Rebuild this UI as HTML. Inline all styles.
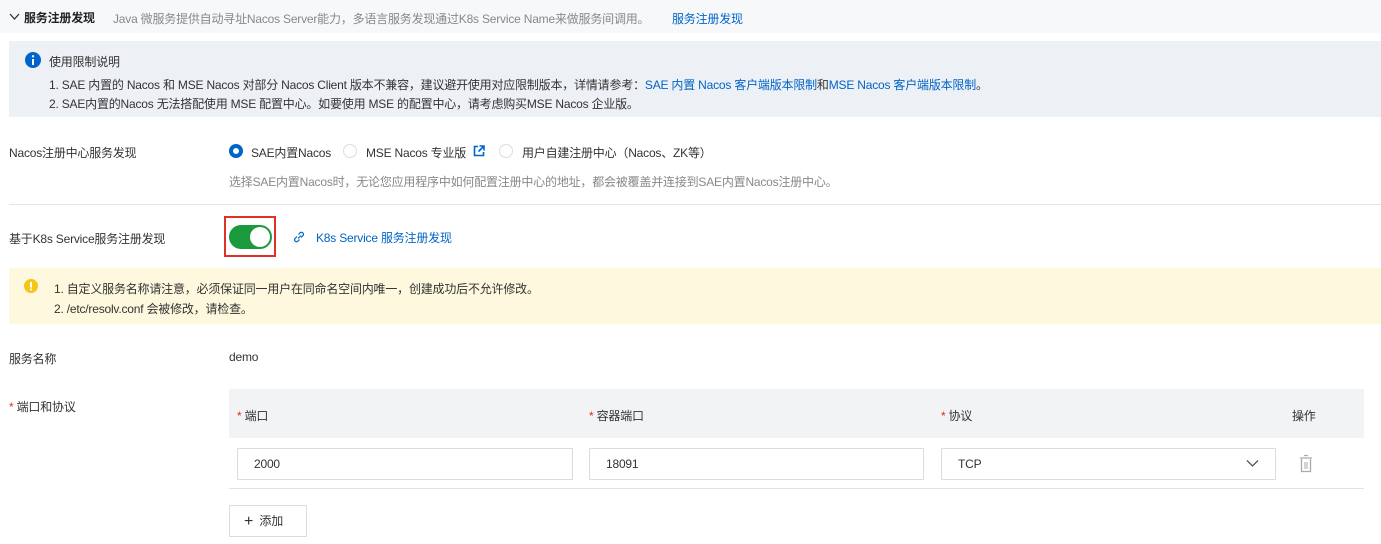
<!DOCTYPE html>
<html><head><meta charset="utf-8"><style>
*{margin:0;padding:0;box-sizing:border-box}
body{width:1381px;height:544px;background:#fff;font-family:"Liberation Sans","Noto Sans CJK SC",sans-serif;font-size:12px;color:#333;position:relative;overflow:hidden;letter-spacing:-0.2px}
.a{position:absolute;white-space:nowrap}
.blue{color:#0064c8}
.gray{color:#888}
.inp{position:absolute;height:32px;border:1px solid #dcdcdc;top:448px;padding-left:16px;line-height:30px;color:#333}
.star{color:#e0301e}
</style></head><body>
<div class="a" style="left:0;top:0;width:1381px;height:33px;background:#f7f8fa"></div>
<svg class="a" style="left:9px;top:12px" width="11" height="10"><path d="M1 2 L5.5 7 L10 2" stroke="#333" stroke-width="1.3" fill="none"/></svg>
<div class="a" style="left:24px;top:9px;font-weight:bold;font-size:12px;color:#222">服务注册发现</div>
<div class="a gray" style="left:113px;top:10px">Java 微服务提供自动寻址Nacos Server能力，多语言服务发现通过K8s Service Name来做服务间调用。</div>
<div class="a blue" style="left:672px;top:10px">服务注册发现</div>

<div class="a" style="left:9px;top:41px;width:1372px;height:76px;background:#edf0f4"></div>
<svg class="a" style="left:25px;top:52px" width="16" height="16"><circle cx="8" cy="8" r="8" fill="#0064c8"/><rect x="7" y="7" width="2" height="6" fill="#fff"/><circle cx="8" cy="4.3" r="1.2" fill="#fff"/></svg>
<div class="a" style="left:49px;top:53px">使用限制说明</div>
<div class="a" style="left:49px;top:76px">1. SAE 内置的 Nacos 和 MSE Nacos 对部分 Nacos Client 版本不兼容，建议避开使用对应限制版本，详情请参考：<span class="blue">SAE 内置 Nacos 客户端版本限制</span>和<span class="blue">MSE Nacos 客户端版本限制</span>。</div>
<div class="a" style="left:49px;top:95px">2. SAE内置的Nacos 无法搭配使用 MSE 配置中心。如要使用 MSE 的配置中心，请考虑购买MSE Nacos 企业版。</div>

<div class="a" style="left:9px;top:144px">Nacos注册中心服务发现</div>
<div class="a" style="left:229px;top:144px;width:14px;height:14px;border-radius:50%;border:4px solid #0064c8;background:#fff"></div>
<div class="a" style="left:251px;top:144px">SAE内置Nacos</div>
<div class="a" style="left:343px;top:144px;width:14px;height:14px;border-radius:50%;border:1px solid #ddd"></div>
<div class="a" style="left:366px;top:144px">MSE Nacos 专业版</div>
<svg class="a" style="left:473px;top:145px" width="12" height="12"><path d="M5 1.5H1.5v9h9V7" stroke="#0064c8" stroke-width="1.6" fill="none"/><path d="M6.5 1h4.5v4.5M11 1L5.5 6.5" stroke="#0064c8" stroke-width="1.6" fill="none"/></svg>
<div class="a" style="left:499px;top:144px;width:14px;height:14px;border-radius:50%;border:1px solid #ddd"></div>
<div class="a" style="left:522px;top:144px">用户自建注册中心（Nacos、ZK等）</div>
<div class="a gray" style="left:229px;top:173px">选择SAE内置Nacos时，无论您应用程序中如何配置注册中心的地址，都会被覆盖并连接到SAE内置Nacos注册中心。</div>
<div class="a" style="left:9px;top:204px;width:1372px;height:1px;background:#e5e5e5"></div>

<div class="a" style="left:9px;top:230px">基于K8s Service服务注册发现</div>
<div class="a" style="left:224px;top:216px;width:52px;height:41px;border:2px solid #e0302a"></div>
<div class="a" style="left:229px;top:225px;width:43px;height:24px;border-radius:12px;background:#1a9a3c"></div>
<div class="a" style="left:250px;top:227px;width:20px;height:20px;border-radius:50%;background:#fff"></div>
<svg class="a" style="left:292px;top:230px" width="14" height="14"><path d="M6 8.5L9 5.5M5 6.5L3 8.5a2 2 0 0 0 2.8 2.8L7.5 9.5M9 7.5L11 5.5a2 2 0 0 0-2.8-2.8L6.5 4.5" stroke="#0064c8" stroke-width="1.2" fill="none"/></svg>
<div class="a blue" style="left:316px;top:229px">K8s Service 服务注册发现</div>

<div class="a" style="left:9px;top:268px;width:1372px;height:56px;background:#fdf8de"></div>
<svg class="a" style="left:24px;top:279px" width="14" height="14"><circle cx="7" cy="7" r="7" fill="#f5c518"/><rect x="6" y="3" width="2" height="5.5" fill="#fff"/><circle cx="7" cy="10.5" r="1.1" fill="#fff"/></svg>
<div class="a" style="left:54px;top:280px">1. 自定义服务名称请注意，必须保证同一用户在同命名空间内唯一，创建成功后不允许修改。</div>
<div class="a" style="left:54px;top:300px">2. /etc/resolv.conf 会被修改，请检查。</div>

<div class="a" style="left:9px;top:350px">服务名称</div>
<div class="a" style="left:229px;top:350px">demo</div>
<div class="a" style="left:9px;top:398px"><span class="star">*</span> 端口和协议</div>

<div class="a" style="left:229px;top:389px;width:1135px;height:49px;background:#f2f3f5"></div>
<div class="a" style="left:237px;top:407px"><span class="star">*</span> 端口</div>
<div class="a" style="left:589px;top:407px"><span class="star">*</span> 容器端口</div>
<div class="a" style="left:941px;top:407px"><span class="star">*</span> 协议</div>
<div class="a" style="left:1292px;top:407px">操作</div>
<div class="inp" style="left:237px;width:336px">2000</div>
<div class="inp" style="left:589px;width:335px">18091</div>
<div class="inp" style="left:941px;width:335px">TCP</div>
<svg class="a" style="left:1246px;top:459px" width="13" height="9"><path d="M1 1.5L6.5 7L12 1.5" stroke="#555" stroke-width="1.3" fill="none"/></svg>
<svg class="a" style="left:1299px;top:454px" width="14" height="19"><path d="M5 1.5h4M1 4h12" stroke="#aaa" stroke-width="1.3"/><path d="M2.5 5v12.5h9V5" stroke="#aaa" stroke-width="1.3" fill="none"/><path d="M6 8v7M8 8v7" stroke="#aaa" stroke-width="1"/></svg>
<div class="a" style="left:229px;top:488px;width:1135px;height:1px;background:#e3e3e3"></div>
<div class="a" style="left:229px;top:505px;width:78px;height:32px;border:1px solid #dcdcdc;line-height:30px;padding-left:14px"><span style="font-size:16px;position:relative;top:1px">+</span>&nbsp; 添加</div>
</body></html>
